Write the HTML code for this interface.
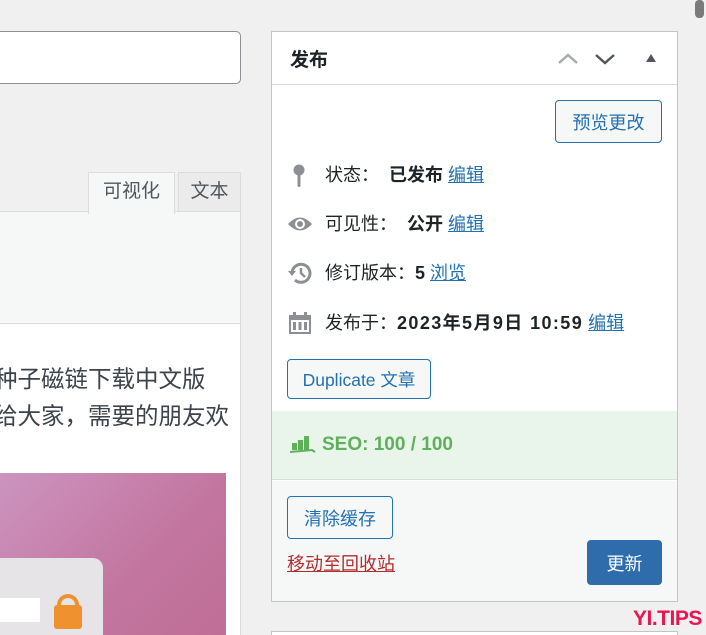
<!DOCTYPE html>
<html><head><meta charset="utf-8"><style>
*{margin:0;padding:0;box-sizing:border-box}
html,body{width:706px;height:635px;overflow:hidden}
body{background:#f0f0f1;position:relative;font-family:"Liberation Sans","Noto Sans CJK SC",sans-serif;color:#1d2327}
.a{position:absolute}
.btn{position:absolute;border:1.5px solid #2271b1;border-radius:4px;background:#f6f7f7;color:#2271b1;font-size:18px;display:flex;align-items:center;justify-content:center}
.row{position:absolute;left:325px;font-size:18px;line-height:26px;height:26px;white-space:nowrap}
.ic{position:absolute;left:287px}
a{color:#2271b1;text-decoration:underline}
b{font-weight:700}
</style></head><body>
<div class="a" style="left:-10px;top:31px;width:251px;height:53px;background:#fff;border:1px solid #8c8f94;border-radius:5px"></div>
<div class="a" style="left:88px;top:172px;width:87px;height:42px;background:#f6f7f7;border:1px solid #dcdcde;border-bottom:none;font-size:19px;color:#50575e;text-align:center;line-height:38px;z-index:2">可视化</div>
<div class="a" style="left:178px;top:172px;width:63px;height:40px;background:#ebebeb;border:1px solid #dcdcde;font-size:19px;color:#50575e;text-align:center;line-height:38px">文本</div>
<div class="a" style="left:0;top:211px;width:241px;height:113px;background:#f6f7f7;border-top:1px solid #dcdcde;border-right:1px solid #dcdcde;border-bottom:1px solid #dcdcde"></div>
<div class="a" style="left:0;top:324px;width:241px;height:311px;background:#fff;border-right:1px solid #dcdcde"></div>
<div class="a" style="left:-6px;top:361px;font-size:23.5px;color:#3c434a;white-space:nowrap;line-height:37px">种子磁链下载中文版<br>给大家，需要的朋友欢</div>
<div class="a" style="left:0;top:473px;width:226px;height:162px;background:linear-gradient(135deg,#cc94c0,#c2769f 60%,#bf6e97)"></div>
<div class="a" style="left:-10px;top:558px;width:113px;height:90px;background:#e6e4e6;border-radius:10px"></div>
<div class="a" style="left:0;top:598px;width:40px;height:24px;background:#fff"></div>
<div class="a" style="left:57px;top:594px;width:22px;height:16px;border:4px solid #f0912f;border-bottom:none;border-radius:11px 11px 0 0"></div>
<div class="a" style="left:54px;top:605px;width:28px;height:24px;background:#f0912f;border-radius:3px"></div>

<div class="a" style="left:271px;top:31px;width:407px;height:571px;background:#fff;border:1px solid #c3c4c7"></div>
<div class="a" style="left:272px;top:84px;width:405px;height:1px;background:#dcdcde"></div>
<div class="a" style="left:290px;top:45px;font-size:19px;font-weight:700">发布</div>
<svg class="a" style="left:557px;top:50px" width="110" height="18"><path d="M2 13 L11 5 L20 13" stroke="#a7aaad" stroke-width="2.5" fill="none"/><path d="M39 5 L48 13 L57 5" stroke="#50575e" stroke-width="2.5" fill="none"/><path d="M89 12 L94 4 L99 12Z" fill="#50575e"/></svg>
<div class="btn" style="left:555px;top:100px;width:107px;height:43px">预览更改</div>
<svg class="a ic" style="left:292px;top:163px" width="14" height="26"><circle cx="7" cy="7" r="5.5" fill="#8c8f94"/><rect x="5.5" y="10" width="3" height="14" rx="1.5" fill="#8c8f94"/></svg>
<div class="row" style="top:162px">状态：&nbsp;&nbsp;<b>已发布</b> <a>编辑</a></div>
<svg class="a ic" style="left:287px;top:215px" width="26" height="18"><path d="M1 9 Q13 -4 25 9 Q13 22 1 9Z" fill="#8c8f94"/><circle cx="13" cy="9" r="5" fill="#fff"/><circle cx="13" cy="9" r="3" fill="#8c8f94"/></svg>
<div class="row" style="top:211px">可见性：&nbsp;&nbsp;<b>公开</b> <a>编辑</a></div>
<svg class="a ic" style="left:287px;top:260px" width="26" height="26"><path d="M5 13 A9 9 0 1 1 8 20" stroke="#8c8f94" stroke-width="3" fill="none"/><path d="M1 11 L5 16 L9 11Z" fill="#8c8f94"/><path d="M14 8 V13 L18 17" stroke="#8c8f94" stroke-width="2.5" fill="none"/></svg>
<div class="row" style="top:260px">修订版本：<b>5</b> <a>浏览</a></div>
<svg class="a ic" style="left:288px;top:311px" width="24" height="24"><rect x="1" y="4" width="22" height="19" fill="#8c8f94"/><rect x="3" y="9" width="18" height="12" fill="#fff"/><rect x="5" y="11" width="3" height="8" fill="#8c8f94"/><rect x="10.5" y="11" width="3" height="8" fill="#8c8f94"/><rect x="16" y="11" width="3" height="8" fill="#8c8f94"/><rect x="5" y="1" width="3" height="5" fill="#8c8f94"/><rect x="16" y="1" width="3" height="5" fill="#8c8f94"/></svg>
<div class="row" style="top:310px">发布于：<b style="letter-spacing:1.4px">2023年5月9日 10:59</b> <a>编辑</a></div>
<div class="btn" style="left:287px;top:359px;width:144px;height:40px;font-size:17.5px">Duplicate 文章</div>
<div class="a" style="left:272px;top:411px;width:405px;height:69px;background:#e9f4ea;border-bottom:1px solid #dcdcde"></div>
<div class="a" style="left:290px;top:434px;font-size:19px;font-weight:700;color:#5fb05a;display:flex;align-items:center"><svg width="26" height="20" style="margin-right:6px"><rect x="2" y="8" width="5" height="7" fill="#5fb05a"/><rect x="8" y="5" width="5" height="10" fill="#5fb05a"/><rect x="14" y="1" width="5" height="14" fill="#5fb05a"/><path d="M0 17 L22 15 L25 17" stroke="#5fb05a" stroke-width="2" fill="none"/></svg>SEO: 100 / 100</div>
<div class="a" style="left:272px;top:481px;width:405px;height:120px;background:#f6f7f7"></div>
<div class="btn" style="left:287px;top:496px;width:106px;height:43px">清除缓存</div>
<div class="a" style="left:287px;top:550px;font-size:18px;color:#b32d2e;text-decoration:underline">移动至回收站</div>
<div class="btn" style="left:587px;top:540px;width:75px;height:45px;background:#2f6cab;border-color:#2f6cab;color:#fff">更新</div>
<div class="a" style="left:271px;top:631px;width:407px;height:10px;background:#fff;border:1px solid #c3c4c7"></div>
<div class="a" style="left:695px;top:0;width:9px;height:18px;background:#7a7a7a;border-radius:4px"></div>
<div class="a" style="left:633px;top:607px;font-size:21px;font-weight:900;color:#e8164f;letter-spacing:-0.5px">YI.TIPS</div>
</body></html>
